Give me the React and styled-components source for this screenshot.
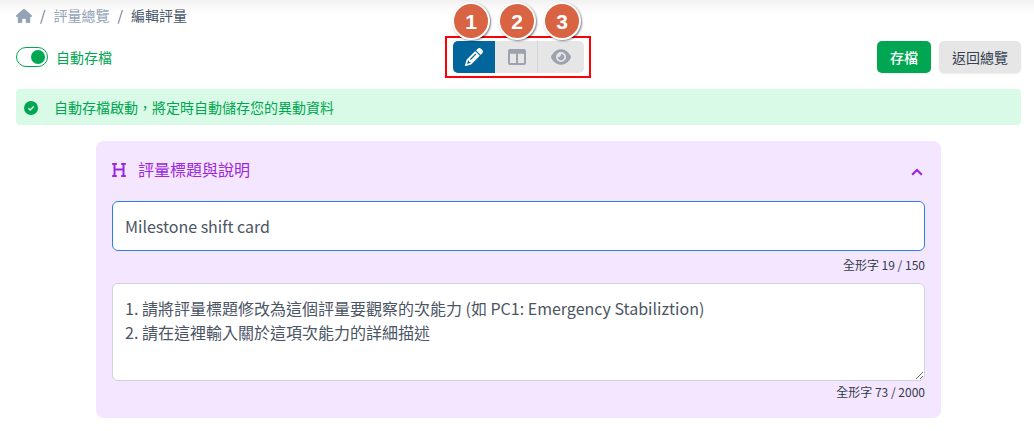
import React from 'react';
import styled, { createGlobalStyle } from 'styled-components';
import { FaHouse, FaPencil, FaEye, FaHeading } from 'react-icons/fa6';

const GlobalStyle = createGlobalStyle`
  *, *::before, *::after { box-sizing: border-box; }
  body {
    margin: 0;
    background: #fff;
    font-family: "Noto Sans CJK TC", "Noto Sans", sans-serif;
    color: #475569;
    overflow: hidden;
  }
  svg { display: block; flex: none; }
`;

const Page = styled.main`
  height: 431px;
  padding: 4px 13px 0 16px;
  background: linear-gradient(#f1f1f1, #f8f8f8 6px, #fdfdfd 12px, #fff 17px);
`;

const Breadcrumb = styled.nav`
  display: flex;
  align-items: center;
  gap: 8px;
  height: 22px;
  font-size: 14px;
  line-height: 22px;
  color: #64748b;
`;

const Crumb = styled.span`
  color: ${(p) => (p.$current ? '#475569' : '#94a3b8')};
`;

const HomeIcon = styled(FaHouse)`
  width: 16px;
  height: 16px;
  margin-top: 2px;
  color: #94a3b8;
`;

const Toolbar = styled.header`
  display: flex;
  align-items: center;
  justify-content: space-between;
  height: 42px;
  margin-top: 10px;
`;

const AutoSave = styled.label`
  display: flex;
  align-items: center;
  gap: 8px;
  width: 429px;
  font-size: 14px;
  line-height: 20px;
  color: #00a651;
`;

const Switch = styled.span`
  display: flex;
  align-items: center;
  justify-content: flex-end;
  width: 32px;
  height: 20px;
  padding-right: 2px;
  border: 1px solid #00a651;
  border-radius: 10px;
  background: #fff;

  &::after {
    content: "";
    width: 14px;
    height: 14px;
    border-radius: 50%;
    background: #00a651;
  }
`;

const ModeFrame = styled.div`
  position: relative;
  display: flex;
  width: 146px;
  height: 42px;
  padding: 3px 5px 3px 6px;
  border: 2px solid #fb0207;
`;

const ModeButton = styled.button`
  display: flex;
  flex: none;
  align-items: center;
  justify-content: center;
  width: ${(p) => p.$width}px;
  height: 32px;
  padding: 0;
  border: 0;
  border-left: ${(p) => (p.$divided ? '1px solid #d1d5db' : '0')};
  border-radius: ${(p) => p.$radius || 0};
  background: ${(p) => (p.$active ? '#02659c' : '#e6e6e6')};
  color: ${(p) => (p.$active ? '#fff' : '#9ca3af')};
`;

const Marker = styled.span`
  position: absolute;
  top: -36px;
  left: ${(p) => p.$left}px;
  display: flex;
  align-items: center;
  justify-content: center;
  width: 38px;
  height: 38px;
  border: 2px solid #fff;
  border-radius: 50%;
  background: #d96444;
  box-shadow: 1px 1px 2px rgba(0, 0, 0, 0.5);
  color: #fff;
  font: bold 21px/1 "Liberation Sans", sans-serif;
`;

const Actions = styled.div`
  display: flex;
  justify-content: flex-end;
  gap: 8px;
  width: 430px;
`;

const Button = styled.button`
  height: 32px;
  padding: 0 13px;
  border: 0;
  border-radius: 5px;
  background: ${(p) => (p.$primary ? '#00a651' : '#e6e6e6')};
  color: ${(p) => (p.$primary ? '#fff' : '#374151')};
  font-family: inherit;
  font-size: 14px;
  font-weight: ${(p) => (p.$primary ? 500 : 400)};
  line-height: 20px;
  box-shadow: 0 1px 2px rgba(0, 0, 0, 0.08);
`;

const Alert = styled.div`
  display: flex;
  align-items: center;
  gap: 16px;
  height: 36px;
  margin-top: 11px;
  padding: 0 8px;
  border-radius: 4px;
  background: #d8fae6;
  color: #00a651;
  font-size: 14px;
  line-height: 20px;
`;

const CheckBadge = styled.svg`
  width: 14px;
  height: 14px;
  margin-top: 1px;
`;

const ColumnsIcon = styled.svg`
  width: 18px;
  height: 16px;
  margin-left: 1px;
`;

const Card = styled.section`
  width: 845px;
  height: 277px;
  margin: 16px 0 0 80px;
  padding: 16px;
  border-radius: 8px;
  background: #f4e6ff;
`;

const CardHeader = styled.div`
  display: flex;
  align-items: center;
  height: 28px;
  padding-right: 2px;
  color: #9c27de;
`;

const HeadingIcon = styled(FaHeading)`
  margin: -2px 0 0 -1px;
`;

const Chevron = styled.svg`
  width: 12px;
  height: 8px;
  margin-top: 2px;
`;

const CardTitle = styled.h2`
  flex: 1;
  margin: -4px 0 0 11px;
  font-size: 16px;
  font-weight: 400;
  line-height: 24px;
`;

const TitleInput = styled.input`
  display: block;
  width: 100%;
  height: 50px;
  margin-top: 16px;
  padding: 0 12px;
  border: 1px solid #2f7de9;
  border-radius: 6px;
  outline: none;
  background: #fff;
  color: #4b5563;
  font: 400 16px/24px "Noto Sans CJK TC", sans-serif;
`;

const Description = styled.textarea`
  display: block;
  width: 100%;
  height: 98px;
  padding: 12px;
  border: 1px solid #d1d5db;
  border-radius: 6px;
  outline: none;
  resize: vertical;
  background: #fff;
  color: #4b5563;
  font: 400 16px/24px "Noto Sans CJK TC", sans-serif;
`;

const Counter = styled.div`
  height: ${(p) => p.$height}px;
  padding-top: ${(p) => p.$top}px;
  color: #333b48;
  font-size: 12px;
  line-height: 16px;
  text-align: right;
`;

export default function App() {
  return (
    <>
      <GlobalStyle />
      <Page>
        <Breadcrumb>
          <HomeIcon />
          <span>/</span>
          <Crumb>評量總覽</Crumb>
          <span>/</span>
          <Crumb $current>編輯評量</Crumb>
        </Breadcrumb>

        <Toolbar>
          <AutoSave>
            <Switch />
            自動存檔
          </AutoSave>
          <ModeFrame>
            <ModeButton $active $width={42} $radius="5px 0 0 5px"><FaPencil size={18} /></ModeButton>
            <ModeButton $width={42}>
              <ColumnsIcon viewBox="0 0 18 16">
                <path
                  fill="currentColor"
                  fillRule="evenodd"
                  d="M2 0h14a2 2 0 0 1 2 2v12a2 2 0 0 1-2 2H2a2 2 0 0 1-2-2V2a2 2 0 0 1 2-2zM2 4.7V14h6V4.7zM10 4.7V14h6V4.7z"
                />
              </ColumnsIcon>
            </ModeButton>
            <ModeButton $divided $width={47} $radius="0 5px 5px 0"><FaEye size={20} /></ModeButton>
            <Marker $left={5}>1</Marker>
            <Marker $left={51}>2</Marker>
            <Marker $left={96}>3</Marker>
          </ModeFrame>
          <Actions>
            <Button $primary>存檔</Button>
            <Button>返回總覽</Button>
          </Actions>
        </Toolbar>

        <Alert>
          <CheckBadge viewBox="0 0 14 14">
            <circle cx="7" cy="7" r="7" fill="#00a651" />
            <path d="M4.4 7.2 6.2 9 9.7 5.4" fill="none" stroke="#e4faed" strokeWidth="1.4" />
          </CheckBadge>
          自動存檔啟動，將定時自動儲存您的異動資料
        </Alert>

        <Card>
          <CardHeader>
            <HeadingIcon size={16} />
            <CardTitle>評量標題與說明</CardTitle>
            <Chevron viewBox="0 0 12 8">
              <path d="M1.2 6.8 6 2 10.8 6.8" fill="none" stroke="currentColor" strokeWidth="2.2" />
            </Chevron>
          </CardHeader>
          <TitleInput defaultValue="Milestone shift card" />
          <Counter $height={32} $top={6}>全形字 19 / 150</Counter>
          <Description
            defaultValue={'1. 請將評量標題修改為這個評量要觀察的次能力 (如 PC1: Emergency Stabiliztion)\n2. 請在這裡輸入關於這項次能力的詳細描述'}
          />
          <Counter $height={20} $top={3}>全形字 73 / 2000</Counter>
        </Card>
      </Page>
    </>
  );
}
